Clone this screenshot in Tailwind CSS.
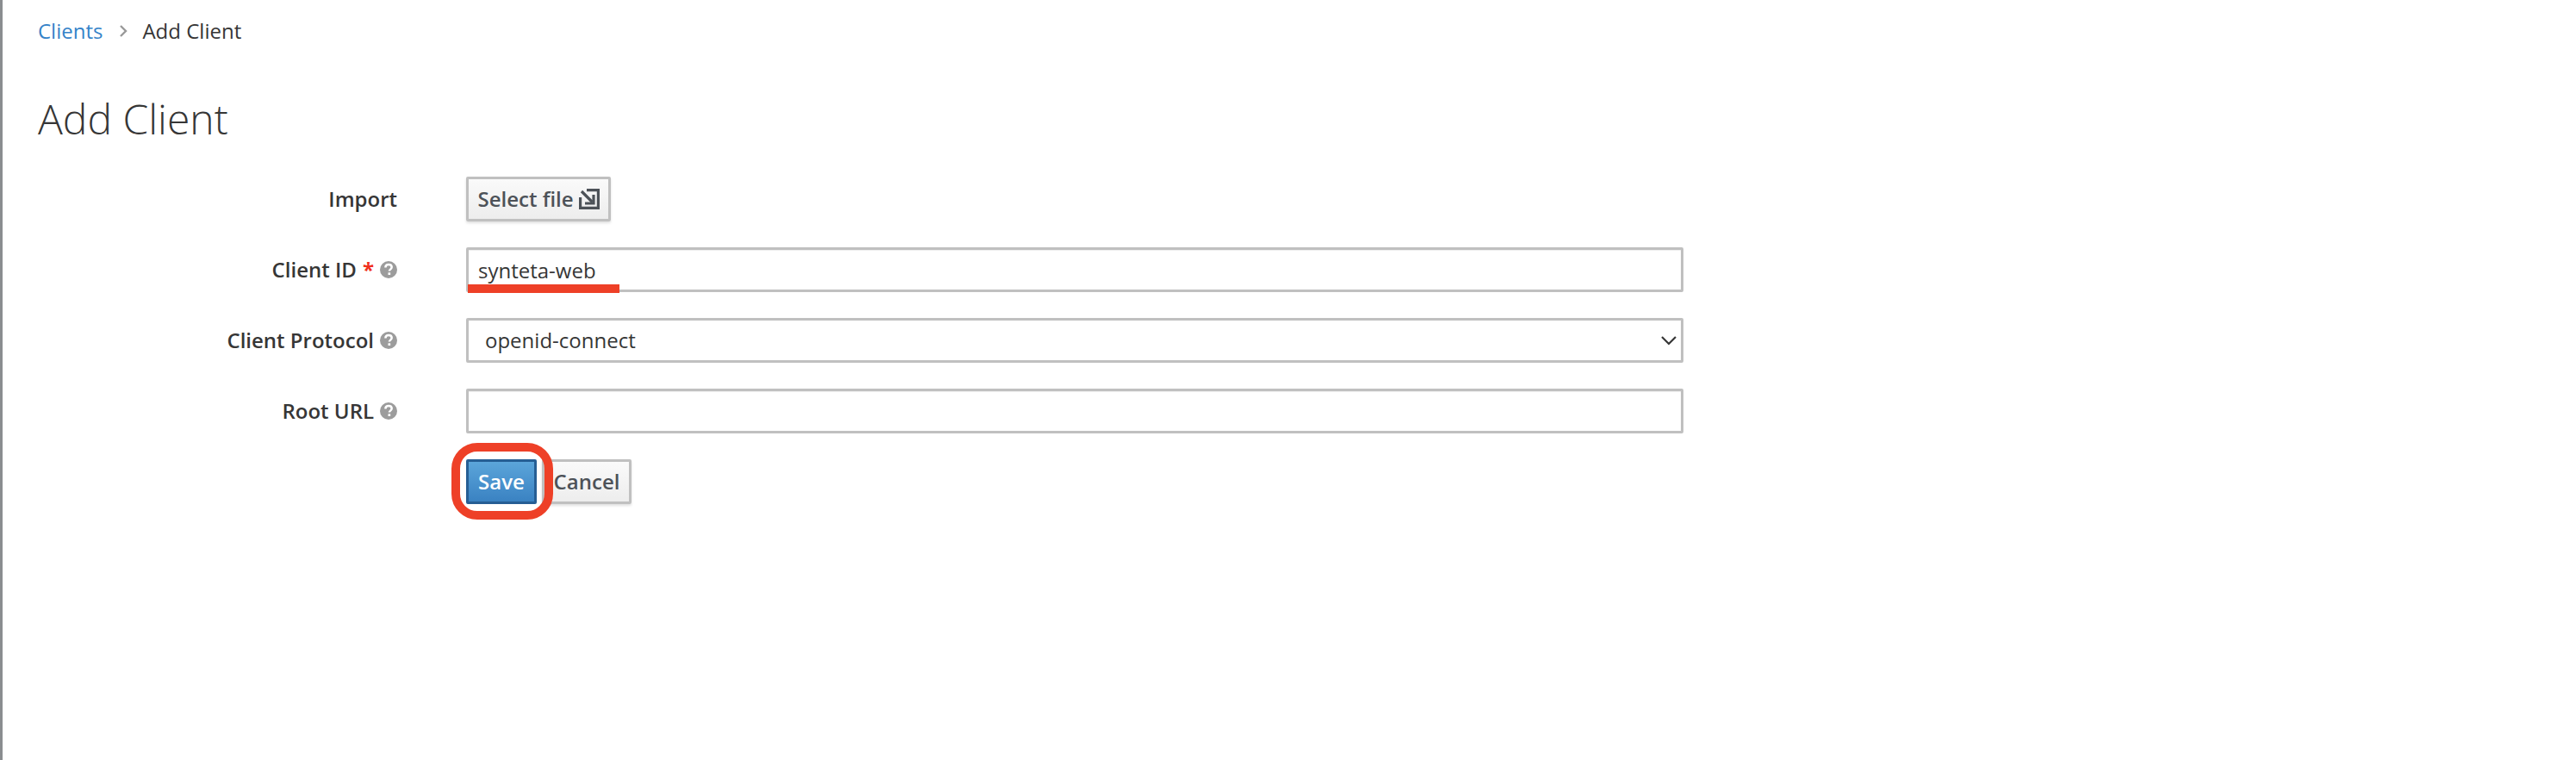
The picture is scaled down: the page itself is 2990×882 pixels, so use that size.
<!DOCTYPE html>
<html>
<head>
<meta charset="utf-8">
<script src="https://cdn.jsdelivr.net/npm/@tailwindcss/browser@4"></script>
</head>
<body class="bg-white">
<div class="relative w-[2990px] h-[882px] overflow-hidden bg-white border-l-[3px] border-[#8a8d90] font-['Open_Sans',sans-serif] text-[24px] text-[#363636]">
  <nav class="flex items-center h-[33px] mt-[19px] ml-[41px]">
    <a class="text-[#3583c9]">Clients</a>
    <svg class="ml-[20px] mr-[17px] w-[9px] h-[14px]" viewBox="0 0 9 14" fill="none" stroke="#999" stroke-width="2.4"><path d="M1 1l6 6-6 6"/></svg>
    <span>Add Client</span>
  </nav>
  <h1 class="ml-[41px] mt-[56px] text-[48px] leading-[60px] font-light">Add Client</h1>
  <form class="mt-[37px]">
    <div class="flex items-center h-[52px] mb-[30px]">
      <label class="w-[458px] text-right font-semibold">Import</label>
      <button type="button" class="ml-[80px] flex items-center gap-[6px] h-[52px] w-[168px] justify-center border-[3px] border-[#c0c0c0] rounded-[2px] bg-gradient-to-b from-[#fafafa] to-[#ededed] shadow-[0_2px_3px_rgba(0,0,0,0.12)] font-semibold text-[#4d5258]">Select file
        <svg class="w-[24px] h-[24px]" viewBox="0 0 24 24" fill="none" stroke="#4d5258" stroke-width="3.2"><path d="M9 1.600h13.400v20.800H1.600V10"/><path d="M3 3l12.500 12.500"/><path d="M17 7v10H7"/></svg>
      </button>
    </div>
    <div class="flex items-center h-[52px] mb-[30px]">
      <label class="w-[458px] flex justify-end items-center font-semibold">Client ID <span class="text-[#f0301d] font-bold ml-[7px] mr-[7px]">*</span>
        <svg class="w-[20px] h-[20px]" viewBox="0 0 20 20"><circle cx="10" cy="10" r="10" fill="#9c9c9c"/><path d="M6.400 7.400c0-2.200 1.700-3.300 3.700-3.300 2.100 0 3.600 1.200 3.600 3 0 2.500-2.800 2.500-2.800 4.500" fill="none" stroke="#fff" stroke-width="2.500"/><rect x="9.500" y="13.300" width="2.700" height="2.700" fill="#fff"/></svg>
      </label>
      <input value="synteta-web" class="ml-[80px] w-[1413px] h-[52px] px-[11px] border-[3px] border-[#c0c0c0] rounded-[2px] bg-white shadow-[inset_0_1px_1px_rgba(0,0,0,0.07)] outline-none">
    </div>
    <div class="flex items-center h-[52px] mb-[30px]">
      <label class="w-[458px] flex justify-end items-center gap-[7px] font-semibold">Client Protocol
        <svg class="w-[20px] h-[20px]" viewBox="0 0 20 20"><circle cx="10" cy="10" r="10" fill="#9c9c9c"/><path d="M6.400 7.400c0-2.200 1.700-3.300 3.700-3.300 2.100 0 3.600 1.200 3.600 3 0 2.500-2.800 2.500-2.800 4.500" fill="none" stroke="#fff" stroke-width="2.500"/><rect x="9.500" y="13.300" width="2.700" height="2.700" fill="#fff"/></svg>
      </label>
      <div class="ml-[80px] w-[1413px] h-[52px] pl-[19px] pr-[5px] flex items-center justify-between border-[3px] border-[#c0c0c0] rounded-[2px] bg-white">
        <span>openid-connect</span>
        <svg class="w-[18px] h-[11px]" viewBox="0 0 18 11" fill="none" stroke="#363636" stroke-width="2.200"><path d="M1 1l8 8 8-8"/></svg>
      </div>
    </div>
    <div class="flex items-center h-[52px] mb-[30px]">
      <label class="w-[458px] flex justify-end items-center gap-[7px] font-semibold">Root URL
        <svg class="w-[20px] h-[20px]" viewBox="0 0 20 20"><circle cx="10" cy="10" r="10" fill="#9c9c9c"/><path d="M6.400 7.400c0-2.200 1.700-3.300 3.700-3.300 2.100 0 3.600 1.200 3.600 3 0 2.500-2.800 2.500-2.800 4.500" fill="none" stroke="#fff" stroke-width="2.500"/><rect x="9.500" y="13.300" width="2.700" height="2.700" fill="#fff"/></svg>
      </label>
      <input class="ml-[80px] w-[1413px] h-[52px] px-[11px] border-[3px] border-[#c0c0c0] rounded-[2px] bg-white shadow-[inset_0_1px_1px_rgba(0,0,0,0.07)] outline-none">
    </div>
    <div class="flex items-center h-[52px] pl-[538px] gap-[6px]">
      <button type="button" class="h-[52px] w-[82px] border-[3px] border-[#265e94] rounded-[2px] bg-gradient-to-b from-[#5ba5da] to-[#3a82c2] font-semibold text-white">Save</button>
      <button type="button" class="h-[52px] w-[104px] border-[3px] border-[#c0c0c0] rounded-[2px] bg-gradient-to-b from-[#fafafa] to-[#ededed] shadow-[0_2px_3px_rgba(0,0,0,0.12)] font-semibold text-[#4d5258]">Cancel</button>
    </div>
  </form>
  <div class="absolute left-[540px] top-[330px] w-[176px] h-[10px] bg-[#ee4027]"></div>
  <div class="absolute left-[521px] top-[514px] w-[118px] h-[89px] border-[10px] border-[#ee4027] rounded-[30px]"></div>
</div>
</body>
</html>
